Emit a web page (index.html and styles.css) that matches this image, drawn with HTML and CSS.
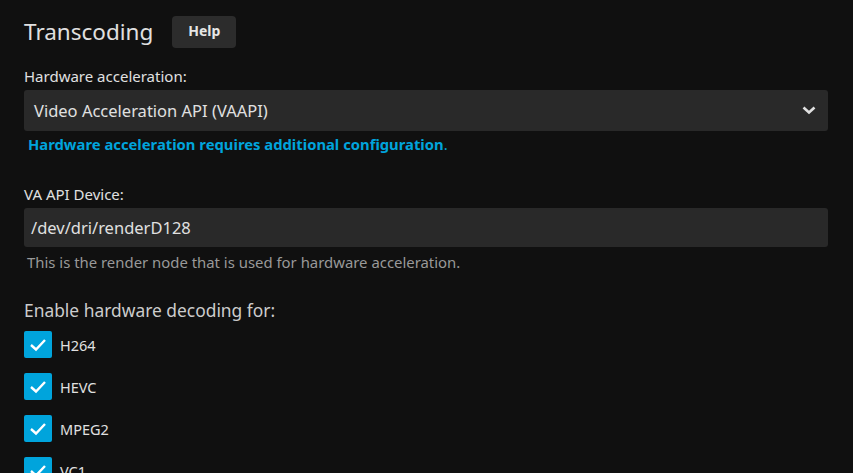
FILE: index.html
```html
<!DOCTYPE html>
<html>
<head>
<meta charset="utf-8">
<link rel="stylesheet" href="styles.css">
</head>
<body>
<div class="page">
  <div class="header">
    <h2 class="title">Transcoding</h2>
    <button class="help">Help</button>
  </div>
  <div class="field">
    <label class="label">Hardware acceleration:</label>
    <div class="select">
      <span>Video Acceleration API (VAAPI)</span>
      <svg class="chev" width="14" height="9" viewBox="0 0 14 9"><path d="M1.5 1.5 L7 6.5 L12.5 1.5" fill="none" stroke="#e0e0e0" stroke-width="2.6"/></svg>
    </div>
    <div class="link-desc"><a class="link">Hardware acceleration requires additional configuration</a>.</div>
  </div>
  <div class="field field2">
    <label class="label">VA API Device:</label>
    <div class="input">/dev/dri/renderD128</div>
    <div class="desc">This is the render node that is used for hardware acceleration.</div>
  </div>
  <div class="checks">
    <div class="checks-title">Enable hardware decoding for:</div>
    <div class="check"><span class="box"><svg width="18" height="14" viewBox="0 0 18 14"><path d="M2 7 L7 11.5 L16 2" fill="none" stroke="#fff" stroke-width="2.4"/></svg></span><span>H264</span></div>
    <div class="check"><span class="box"><svg width="18" height="14" viewBox="0 0 18 14"><path d="M2 7 L7 11.5 L16 2" fill="none" stroke="#fff" stroke-width="2.4"/></svg></span><span>HEVC</span></div>
    <div class="check"><span class="box"><svg width="18" height="14" viewBox="0 0 18 14"><path d="M2 7 L7 11.5 L16 2" fill="none" stroke="#fff" stroke-width="2.4"/></svg></span><span>MPEG2</span></div>
    <div class="check"><span class="box"><svg width="18" height="14" viewBox="0 0 18 14"><path d="M2 7 L7 11.5 L16 2" fill="none" stroke="#fff" stroke-width="2.4"/></svg></span><span>VC1</span></div>
  </div>
</div>
</body>
</html>
```
FILE: styles.css
```css
html, body {
  margin: 0;
  padding: 0;
  background: #101010;
  color: #e0e0e0;
  font-family: "Noto Sans", sans-serif;
  overflow: hidden;
  height: 473px;
}
.page {
  padding: 16px 25px 0 24px;
}
.header {
  display: flex;
  align-items: center;
  height: 32px;
  gap: 19px;
}
.title {
  margin: 0;
  font-size: 22.5px;
  font-weight: 400;
  color: #e0e0e0;
  line-height: 32px;
}
.help {
  font-family: "Noto Sans", sans-serif;
  background: #2c2c2c;
  color: #e6e6e6;
  border: 0;
  border-radius: 4px;
  width: 64px;
  height: 32px;
  font-weight: 700;
  font-size: 14px;
  padding: 0 0 4px 0;
}
.field {
  margin-top: 18px;
}
.label {
  display: block;
  font-size: 15px;
  line-height: 20px;
  color: #e0e0e0;
  margin-bottom: 4px;
}
.select {
  height: 41px;
  background: #292929;
  border-radius: 3px;
  display: flex;
  align-items: center;
  justify-content: space-between;
  padding: 0 10px;
  font-size: 16.5px;
  color: #e0e0e0;
}
.chev {
  margin-right: 2px;
}
.link-desc {
  font-size: 14.8px;
  margin-top: 3px;
  padding-left: 4px;
  color: #00a4dc;
  line-height: 20px;
}
.link {
  font-weight: 700;
  color: #00a4dc;
}
.field2 {
  margin-top: 30px;
}
.input {
  height: 39px;
  background: #292929;
  border-radius: 3px;
  display: flex;
  align-items: center;
  padding: 0 7px;
  font-size: 16.5px;
  color: #e0e0e0;
}
.desc {
  font-size: 14.9px;
  color: #999;
  padding-left: 3px;
  margin-top: 5px;
  line-height: 20px;
}
.checks {
  margin-top: 27px;
}
.checks-title {
  font-size: 17.4px;
  color: #ccc;
  line-height: 22px;
  margin-bottom: 10px;
}
.check {
  display: flex;
  align-items: center;
  height: 27px;
  margin-bottom: 15px;
  font-size: 14.5px;
  color: #e0e0e0;
}
.box {
  width: 28px;
  height: 27px;
  background: #00a4dc;
  border-radius: 2px;
  display: flex;
  align-items: center;
  justify-content: center;
  margin-right: 8px;
}
```
